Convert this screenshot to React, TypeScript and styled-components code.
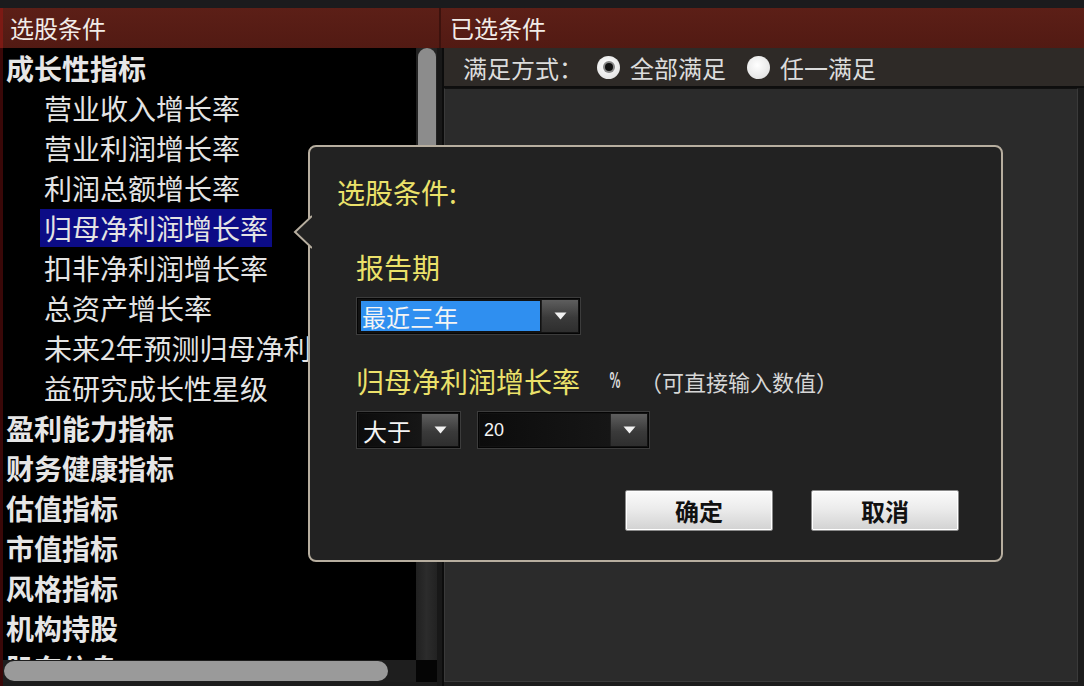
import React from "react";
import styled, { createGlobalStyle } from "styled-components";

const GlobalStyle = createGlobalStyle`
  html, body { margin: 0; padding: 0; background: #111; }
  body { font-family: "Noto Sans CJK SC", "Microsoft YaHei", sans-serif; }
  * { box-sizing: border-box; }
`;

const Root = styled.div`
  position: relative;
  width: 1084px;
  height: 686px;
  overflow: hidden;
  background: #161616;
  display: flex;
  flex-direction: column;
`;

const TopStrip = styled.div`
  height: 8px;
  background: #1b1b1d;
  flex: none;
`;

const HeaderBar = styled.div`
  height: 40px;
  flex: none;
  display: flex;
  background: linear-gradient(#5c1f17, #521a13);
  border-left: 3px solid #7c1a14;
`;

const HeaderCell = styled.div<{ $w?: number; $pad: number }>`
  ${(p) => (p.$w ? `width: ${p.$w}px; flex: none;` : "flex: 1;")}
  padding-left: ${(p) => p.$pad}px;
  font-size: 24px;
  line-height: 40px;
  color: #f2ece8;
  ${(p) => (p.$w ? "border-right: 2px solid #3c120d;" : "")}
`;

const Body = styled.div`
  flex: 1;
  display: flex;
  min-height: 0;
`;

const LeftPanel = styled.div`
  width: 442px;
  flex: none;
  display: grid;
  grid-template-columns: 1fr 21px;
  grid-template-rows: 1fr 22px 4px;
  background: #000;
  border-left: 3px solid #3a0808;
  border-right: 5px solid #181818;
`;

const List = styled.div`
  overflow: hidden;
  display: flex;
  flex-direction: column;
  padding-left: 3px;
`;

const Category = styled.div`
  height: 40px;
  flex: none;
  font-size: 28px;
  font-weight: 700;
  line-height: 40px;
  color: #e6e6e6;
  white-space: nowrap;
`;

const SubItem = styled.div`
  height: 40px;
  flex: none;
  padding-left: 34px;
  display: flex;
  align-items: center;
  white-space: nowrap;
`;

const SubLabel = styled.span<{ $sel?: boolean }>`
  height: 38px;
  padding: 0 4px;
  font-size: 28px;
  line-height: 38px;
  color: #e4e4e4;
  background: ${(p) => (p.$sel ? "#0c0c86" : "transparent")};
`;

const VTrack = styled.div`
  background: linear-gradient(90deg, #202020, #2c2c2c 50%, #222);
  padding: 0 1px 0 2px;
`;

const VThumb = styled.div`
  height: 320px;
  background: #8c8c8c;
  border-radius: 9px 9px 2px 2px;
`;

const HTrack = styled.div`
  background: #1e1e1e;
  padding: 1px 28px 1px 1px;
`;

const HThumb = styled.div`
  height: 20px;
  background: #9a9a9a;
  border-radius: 10px;
`;

const Corner = styled.div`
  background: #050505;
`;

const BottomEdge = styled.div`
  grid-column: 1 / 3;
  background: #1c1c1c;
`;

const RightPanel = styled.div`
  flex: 1;
  display: flex;
  flex-direction: column;
  background: #1c1c1c;
  border-left: 2px solid #0c0c0c;
`;

const ModeRow = styled.div`
  height: 40px;
  flex: none;
  display: flex;
  align-items: center;
  padding-left: 19px;
  background: #2e2a27;
  color: #dcdcdc;
  font-size: 24px;
  border-bottom: 2px solid #0e0e0e;
`;

const ModeLabel = styled.span`
  margin-right: 14px;
`;

const Radio = styled.span<{ $on?: boolean }>`
  width: 23px;
  height: 23px;
  border-radius: 50%;
  background: radial-gradient(circle at 45% 40%, #ffffff, #e6e6e6 70%, #b8b8b8);
  display: inline-flex;
  align-items: center;
  justify-content: center;
  margin-right: 10px;
  &::after {
    content: "";
    width: 8px;
    height: 8px;
    border-radius: 50%;
    background: ${(p) => (p.$on ? "#111" : "transparent")};
    box-shadow: ${(p) => (p.$on ? "0 0 0 2px #888" : "none")};
  }
`;

const RadioText = styled.span`
  margin-right: 21px;
`;

const ContentBox = styled.div`
  flex: 1;
  margin: 0 6px 4px 0;
  background: #2b2b2b;
  border: 1px solid #3a3a3a;
  border-top-color: #111;
`;

/* popup */
const Popup = styled.div`
  position: absolute;
  left: 308px;
  top: 145px;
  width: 695px;
  height: 417px;
  background: #222222;
  border: 2px solid #b7ae9f;
  border-radius: 8px;
  padding: 30px 0 0 27px;
  display: flex;
  flex-direction: column;
`;

const Arrow = styled.svg`
  position: absolute;
  left: -17px;
  top: 68px;
`;

const Title = styled.div`
  font-size: 28px;
  line-height: 30px;
  color: #ebe16a;
`;

const Section = styled.div`
  padding-left: 19px;
  display: flex;
  flex-direction: column;
`;

const Label = styled.div<{ $top: number }>`
  margin-top: ${(p) => p.$top}px;
  font-size: 28px;
  line-height: 30px;
  color: #ebe16a;
  display: flex;
  align-items: center;
  white-space: nowrap;
`;

const Percent = styled.span`
  font-family: "DejaVu Sans", sans-serif;
  font-size: 22px;
  font-weight: 700;
  color: #d8d8d8;
  margin-left: 24px;
  display: inline-block;
  transform: scaleX(0.5);
`;

const Hint = styled.span`
  font-size: 22px;
  color: #d6d6d6;
  margin-left: 14px;
`;

const Row = styled.div`
  margin-top: 15px;
  display: flex;
  gap: 16px;
`;

const Combo = styled.div<{ $w: number }>`
  width: ${(p) => p.$w}px;
  height: 38px;
  display: flex;
  padding: 2px;
  background: #121212;
  border: 1px solid #3c3c3c;
  box-shadow: inset 0 0 0 1px #050505;
`;

const ComboValue = styled.div<{ $sel?: boolean; $num?: boolean }>`
  flex: 1;
  display: flex;
  align-items: center;
  padding-left: ${(p) => (p.$sel ? 1 : 4)}px;
  margin: ${(p) => (p.$sel ? "1px 1px 1px 2px" : "0")};
  background: ${(p) => (p.$sel ? "#2f8ff0" : "linear-gradient(90deg, #0c0c0c, #161616)")};
  color: #f4f4f4;
  font-size: ${(p) => (p.$num ? 18 : 24)}px;
  font-family: ${(p) =>
    p.$num ? '"Liberation Sans", Arial, sans-serif' : '"Noto Sans CJK SC", sans-serif'};
`;

const ComboButton = styled.div`
  width: 37px;
  flex: none;
  display: flex;
  align-items: center;
  justify-content: center;
  background: linear-gradient(#5e5e5e, #3a3a3a 55%, #2e2e2e);
  border-left: 1px solid #202020;
`;

const Buttons = styled.div`
  margin-top: 41px;
  align-self: flex-end;
  margin-right: 42px;
  display: flex;
  gap: 38px;
`;

const Btn = styled.button`
  width: 148px;
  height: 41px;
  padding: 0;
  border: 1px solid #8a8a8a;
  border-radius: 2px;
  background: linear-gradient(#fbfbfb, #ececec 45%, #d2d2d2);
  font-family: "Noto Sans CJK SC", sans-serif;
  font-size: 24px;
  font-weight: 700;
  line-height: 38px;
  color: #111;
  box-shadow: inset 0 0 0 1px #fff;
`;

const Caret = () => (
  <svg width="13" height="8" viewBox="0 0 13 8">
    <path d="M0.5 0.5 H12.5 L6.5 7.5 Z" fill="#f2f2f2" />
  </svg>
);

const growth = [
  "营业收入增长率",
  "营业利润增长率",
  "利润总额增长率",
  "归母净利润增长率",
  "扣非净利润增长率",
  "总资产增长率",
  "未来2年预测归母净利润增长率",
  "益研究成长性星级",
];

const cats = ["盈利能力指标", "财务健康指标", "估值指标", "市值指标", "风格指标", "机构持股", "股东信息"];

export default function App() {
  return (
    <Root>
      <GlobalStyle />
      <TopStrip />
      <HeaderBar>
        <HeaderCell $w={438} $pad={7}>选股条件</HeaderCell>
        <HeaderCell $pad={9}>已选条件</HeaderCell>
      </HeaderBar>
      <Body>
        <LeftPanel>
          <List>
            <Category>成长性指标</Category>
            {growth.map((g) => (
              <SubItem key={g}>
                <SubLabel $sel={g === "归母净利润增长率"}>{g}</SubLabel>
              </SubItem>
            ))}
            {cats.map((c) => (
              <Category key={c}>{c}</Category>
            ))}
          </List>
          <VTrack>
            <VThumb />
          </VTrack>
          <HTrack>
            <HThumb />
          </HTrack>
          <Corner />
          <BottomEdge />
        </LeftPanel>
        <RightPanel>
          <ModeRow>
            <ModeLabel>满足方式：</ModeLabel>
            <Radio $on />
            <RadioText>全部满足</RadioText>
            <Radio />
            <RadioText>任一满足</RadioText>
          </ModeRow>
          <ContentBox />
        </RightPanel>
      </Body>

      <Popup>
        <Arrow width="19" height="34" viewBox="0 0 19 34">
          <path d="M19 1 L2 17 L19 33" fill="#222" stroke="#b7ae9f" strokeWidth="2" />
        </Arrow>
        <Title>选股条件:</Title>
        <Section>
          <Label $top={45}>报告期</Label>
          <Row>
            <Combo $w={225}>
              <ComboValue $sel>最近三年</ComboValue>
              <ComboButton>
                <Caret />
              </ComboButton>
            </Combo>
          </Row>
          <Label $top={31}>
            归母净利润增长率
            <Percent>%</Percent>
            <Hint>（可直接输入数值）</Hint>
          </Label>
          <Row>
            <Combo $w={105}>
              <ComboValue>大于</ComboValue>
              <ComboButton>
                <Caret />
              </ComboButton>
            </Combo>
            <Combo $w={173}>
              <ComboValue $num>20</ComboValue>
              <ComboButton>
                <Caret />
              </ComboButton>
            </Combo>
          </Row>
        </Section>
        <Buttons>
          <Btn>确定</Btn>
          <Btn>取消</Btn>
        </Buttons>
      </Popup>
    </Root>
  );
}
